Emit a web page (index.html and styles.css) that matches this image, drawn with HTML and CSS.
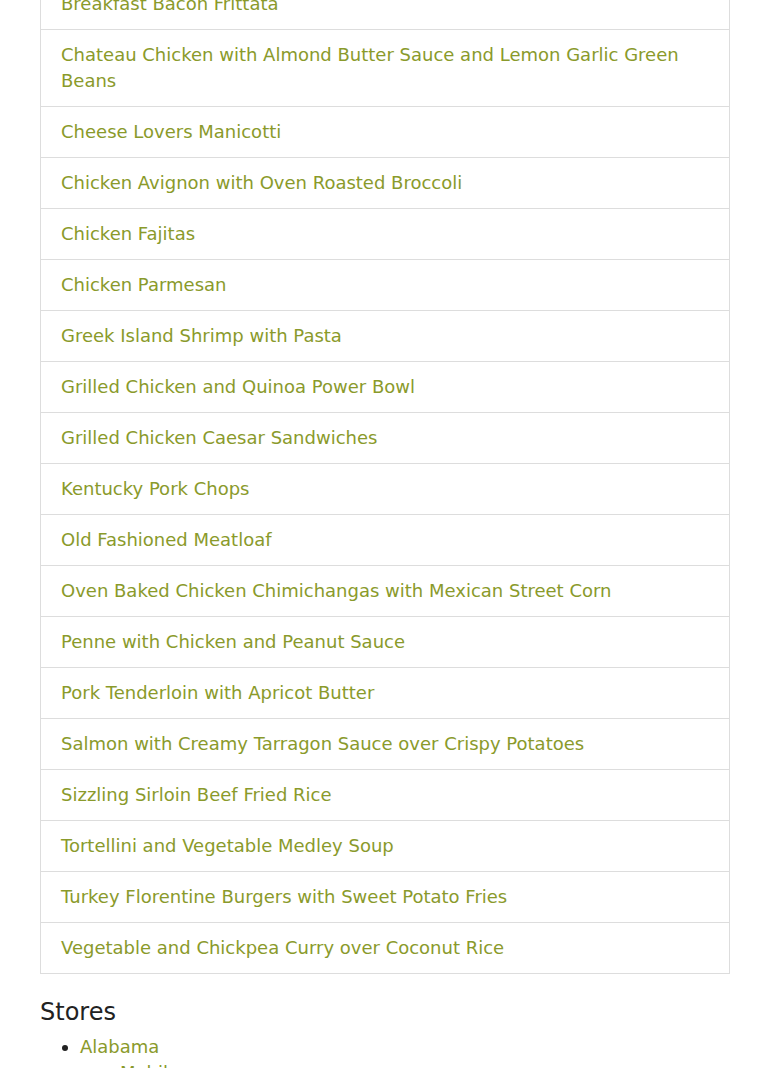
FILE: index.html
```html
<!DOCTYPE html>
<html>
<head>
<meta charset="utf-8">
<link rel="stylesheet" href="styles.css">
</head>
<body>
<div class="page">
  <div class="list-group">
    <a class="item" href="#">Breakfast Bacon Frittata</a>
    <a class="item" href="#">Chateau Chicken with Almond Butter Sauce and Lemon Garlic Green Beans</a>
    <a class="item" href="#">Cheese Lovers Manicotti</a>
    <a class="item" href="#">Chicken Avignon with Oven Roasted Broccoli</a>
    <a class="item" href="#">Chicken Fajitas</a>
    <a class="item" href="#">Chicken Parmesan</a>
    <a class="item" href="#">Greek Island Shrimp with Pasta</a>
    <a class="item" href="#">Grilled Chicken and Quinoa Power Bowl</a>
    <a class="item" href="#">Grilled Chicken Caesar Sandwiches</a>
    <a class="item" href="#">Kentucky Pork Chops</a>
    <a class="item" href="#">Old Fashioned Meatloaf</a>
    <a class="item" href="#">Oven Baked Chicken Chimichangas with Mexican Street Corn</a>
    <a class="item" href="#">Penne with Chicken and Peanut Sauce</a>
    <a class="item" href="#">Pork Tenderloin with Apricot Butter</a>
    <a class="item" href="#">Salmon with Creamy Tarragon Sauce over Crispy Potatoes</a>
    <a class="item" href="#">Sizzling Sirloin Beef Fried Rice</a>
    <a class="item" href="#">Tortellini and Vegetable Medley Soup</a>
    <a class="item" href="#">Turkey Florentine Burgers with Sweet Potato Fries</a>
    <a class="item" href="#">Vegetable and Chickpea Curry over Coconut Rice</a>
  </div>
  <h3 class="heading">Stores</h3>
  <ul class="stores">
    <li><a href="#">Alabama</a>
      <ul class="sub">
        <li><a href="#">Mobile</a></li>
      </ul>
    </li>
  </ul>
</div>
</body>
</html>
```
FILE: styles.css
```css
html, body {
  margin: 0;
  padding: 0;
  background: #fff;
}
body {
  font-family: "DejaVu Sans", "Liberation Sans", sans-serif;
  font-size: 18px;
  line-height: 26px;
  color: #222;
  overflow: hidden;
}
.page {
  margin: -22px 40px 0 40px;
  width: 690px;
}
.list-group {
  display: flex;
  flex-direction: column;
  border: 1px solid #dddddd;
}
.item {
  display: block;
  padding: 12px 20px;
  border-bottom: 1px solid #dddddd;
  color: #8a9a2b;
  text-decoration: none;
}
.item:last-child {
  border-bottom: none;
}
.heading {
  font-size: 24px;
  font-weight: normal;
  line-height: 28px;
  margin: 24px 0 8px 0;
  color: #222;
}
.stores {
  margin: 0;
  padding-left: 40px;
}
.stores a {
  color: #8a9a2b;
  text-decoration: none;
}
.sub {
  margin: 0;
  padding-left: 40px;
}
```
